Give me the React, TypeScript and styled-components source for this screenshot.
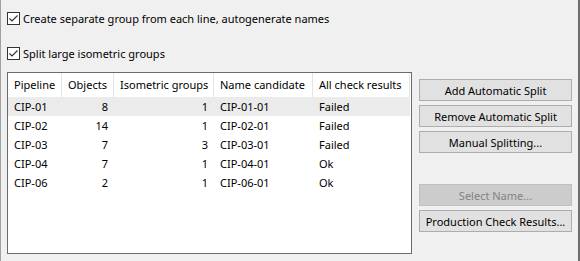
import React from "react";
import styled, { createGlobalStyle } from "styled-components";

const GlobalStyle = createGlobalStyle`
  html, body {
    margin: 0;
    padding: 0;
    background: #f0f0f0;
  }
  body {
    font-family: "Noto Sans", "Open Sans", sans-serif;
    font-size: 11px;
    color: #000;
  }
`;

const Dialog = styled.div`
  box-sizing: border-box;
  width: 580px;
  height: 261px;
  background: #f0f0f0;
  border-left: 1px solid #a0a0a0;
  border-right: 2px solid #6d6d6d;
  padding: 12px 0 0 6px;
  display: flex;
  flex-direction: column;
`;

const Options = styled.div`
  display: flex;
  flex-direction: column;
  gap: 22px;
`;

const CheckRow = styled.label`
  display: flex;
  align-items: center;
  gap: 3px;
  height: 13px;
  line-height: 13px;
  white-space: nowrap;
`;

const Box = styled.span`
  box-sizing: border-box;
  width: 13px;
  height: 13px;
  border: 1px solid #333;
  background: #fff;
  display: flex;
  align-items: center;
  justify-content: center;
  flex: none;
`;

const Body = styled.div`
  display: flex;
  gap: 7px;
  margin-top: 12px;
`;

const ListBox = styled.div`
  box-sizing: border-box;
  width: 405px;
  height: 182px;
  border: 1px solid #6b6b6b;
  background: #fff;
  overflow: hidden;
`;

const Grid = styled.div`
  display: grid;
  grid-template-columns: 54px 52px 100px 99px 97px;
`;

const HeadCell = styled.div`
  height: 24px;
  line-height: 24px;
  padding: 0 6px;
  border-right: 1px solid #e5e5e5;
  white-space: nowrap;
  overflow: hidden;
`;

const Row = styled.div<{ $selected?: boolean }>`
  display: contents;
  & > div {
    background: ${(p) => (p.$selected ? "#ebebeb" : "transparent")};
  }
`;

const Cell = styled.div<{ $right?: boolean }>`
  height: 19px;
  line-height: 19px;
  padding: 0 6px 0 6px;
  text-align: ${(p) => (p.$right ? "right" : "left")};
  white-space: nowrap;
`;

const Buttons = styled.div`
  display: flex;
  flex-direction: column;
  gap: 4px;
  padding-top: 7px;
  width: 153px;
`;

const Button = styled.button<{ $gapBefore?: boolean }>`
  box-sizing: border-box;
  height: 22px;
  width: 153px;
  margin-top: ${(p) => (p.$gapBefore ? "27px" : "0")};
  border: 1px solid #adadad;
  background: #e1e1e1;
  color: #000;
  font-family: inherit;
  font-size: 11px;
  white-space: nowrap;
  padding: 0;
  &:disabled {
    background: #cccccc;
    border-color: #bfbfbf;
    color: #838383;
  }
`;

const Check = () => (
  <Box>
    <svg width="11" height="11" viewBox="0 0 11 11">
      <path d="M1.5 5.5 L4 8 L9.5 2.5" fill="none" stroke="#333" strokeWidth="1.2" />
    </svg>
  </Box>
);

const rows = [
  ["CIP-01", "8", "1", "CIP-01-01", "Failed"],
  ["CIP-02", "14", "1", "CIP-02-01", "Failed"],
  ["CIP-03", "7", "3", "CIP-03-01", "Failed"],
  ["CIP-04", "7", "1", "CIP-04-01", "Ok"],
  ["CIP-06", "2", "1", "CIP-06-01", "Ok"],
];

const headers = ["Pipeline", "Objects", "Isometric groups", "Name candidate", "All check results"];

export default function App() {
  return (
    <>
      <GlobalStyle />
      <Dialog>
        <Options>
          <CheckRow>
            <Check />
            Create separate group from each line, autogenerate names
          </CheckRow>
          <CheckRow>
            <Check />
            Split large isometric groups
          </CheckRow>
        </Options>
        <Body>
          <ListBox>
            <Grid>
              {headers.map((h) => (
                <HeadCell key={h}>{h}</HeadCell>
              ))}
              {rows.map((r, i) => (
                <Row key={r[0]} $selected={i === 0}>
                  <Cell>{r[0]}</Cell>
                  <Cell $right>{r[1]}</Cell>
                  <Cell $right>{r[2]}</Cell>
                  <Cell>{r[3]}</Cell>
                  <Cell>{r[4]}</Cell>
                </Row>
              ))}
            </Grid>
          </ListBox>
          <Buttons>
            <Button>Add Automatic Split</Button>
            <Button>Remove Automatic Split</Button>
            <Button>Manual Splitting...</Button>
            <Button $gapBefore disabled>
              Select Name...
            </Button>
            <Button>Production Check Results...</Button>
          </Buttons>
        </Body>
      </Dialog>
    </>
  );
}
